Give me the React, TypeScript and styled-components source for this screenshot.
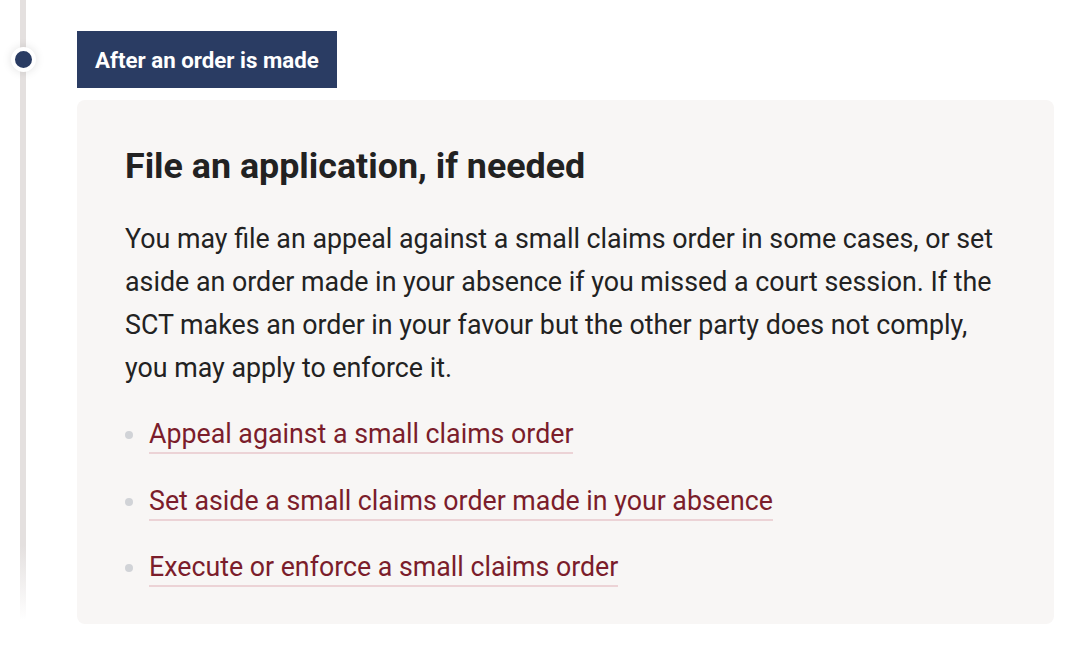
import React from 'react';
import styled, { createGlobalStyle } from 'styled-components';

const GlobalStyle = createGlobalStyle`
  html, body {
    margin: 0;
    padding: 0;
    background: #ffffff;
    font-family: Roboto, "Liberation Sans", Arial, sans-serif;
  }
`;

const Timeline = styled.section`
  position: relative;
  width: 1080px;
  height: 649px;
  box-sizing: border-box;
  padding: 31px 26px 0 77px;

  &::before {
    content: '';
    position: absolute;
    left: 20px;
    top: 0;
    width: 6px;
    height: 620px;
    background: linear-gradient(to bottom, #e4e0df 0%, #e4e0df 88%, rgba(228, 224, 223, 0) 100%);
  }
`;

const Dot = styled.span`
  position: absolute;
  left: 11px;
  top: 47px;
  width: 17px;
  height: 17px;
  border-radius: 50%;
  background: #2a3c63;
  border: 4px solid #ffffff;
  box-shadow: 0 0 10px rgba(0, 0, 0, 0.12);
`;

const StepLabel = styled.div`
  display: inline-flex;
  align-items: center;
  height: 57px;
  padding: 0 18px;
  background: #2a3c63;
  color: #ffffff;
  font-size: 22.3px;
  font-weight: 700;
`;

const Card = styled.div`
  margin-top: 12px;
  box-sizing: border-box;
  width: 977px;
  height: 524px;
  padding: 44px 48px 0 48px;
  background: #f8f6f5;
  border-radius: 8px;
`;

const Heading = styled.h2`
  margin: 0;
  font-size: 35.8px;
  line-height: 44px;
  font-weight: 700;
  color: #222222;
`;

const Body = styled.p`
  margin: 30px 0 0;
  font-size: 26.8px;
  line-height: 43px;
  color: #222222;
`;

const LinkList = styled.ul`
  list-style: none;
  margin: 26px 0 0;
  padding: 0;
  display: flex;
  flex-direction: column;
  gap: 28.5px;
`;

const LinkItem = styled.li`
  display: flex;
  align-items: center;
  gap: 16px;

  &::before {
    content: '';
    width: 8px;
    height: 8px;
    border-radius: 50%;
    background: #d1d3d7;
    flex-shrink: 0;
  }
`;

const TextLink = styled.a`
  font-size: 26.75px;
  line-height: 36px;
  color: #7b1d2b;
  text-decoration: none;
  border-bottom: 2px solid #ecd3d6;
`;

const links = [
  'Appeal against a small claims order',
  'Set aside a small claims order made in your absence',
  'Execute or enforce a small claims order',
];

export default function App() {
  return (
    <>
      <GlobalStyle />
      <Timeline>
        <Dot />
        <StepLabel>After an order is made</StepLabel>
        <Card>
          <Heading>File an application, if needed</Heading>
          <Body>
            You may file an appeal against a small claims order in some cases, or set aside an order
            made in your absence if you missed a court session. If the SCT makes an order in your
            favour but the other party does not comply, you may apply to enforce it.
          </Body>
          <LinkList>
            {links.map(label => (
              <LinkItem key={label}>
                <TextLink href="#">{label}</TextLink>
              </LinkItem>
            ))}
          </LinkList>
        </Card>
      </Timeline>
    </>
  );
}
